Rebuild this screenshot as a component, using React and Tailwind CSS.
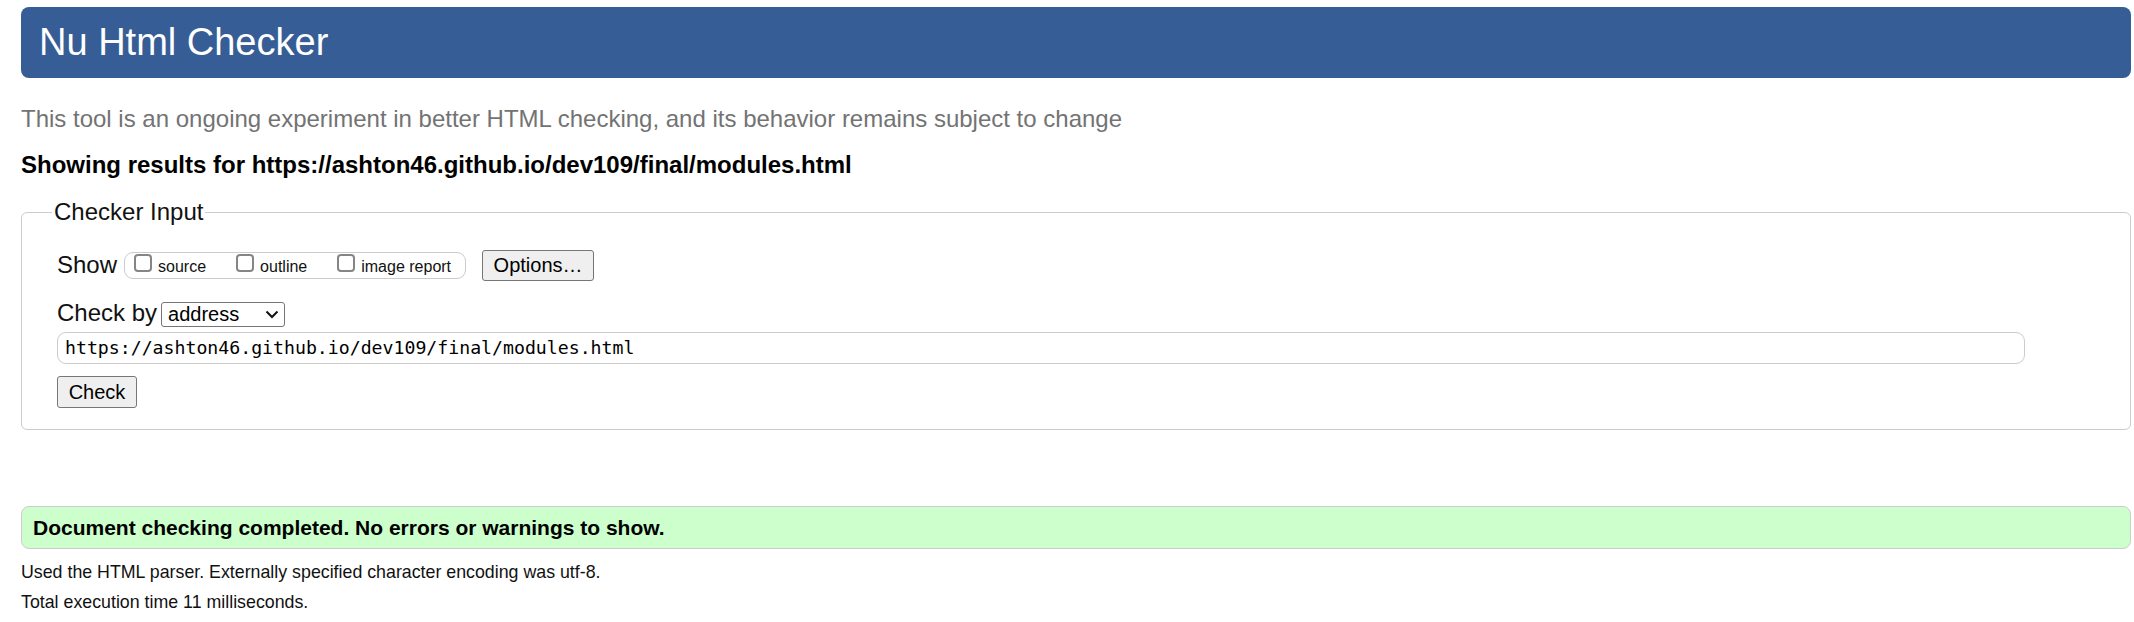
import React from 'react'

const Box = ({ label }) => (
  <label className="flex items-center">
    <span className="mb-[5px] block h-[18px] w-[18px] rounded-[4px] border-2 border-[#858585] bg-white" />
    <span className="ml-[6px] mt-[3px] text-[16px] leading-[18px]">{label}</span>
  </label>
)

export default function App() {
  return (
    <div className="min-h-screen bg-white pl-[21px] pr-[3px] text-[#111] font-['Liberation_Sans',Arial,sans-serif]">
      {/* banner */}
      <h1 className="mt-[7px] h-[71px] rounded-[8px] bg-[#365d95] pl-[18px] text-[38px] font-normal leading-[71px] text-white">
        Nu Html Checker
      </h1>

      <p className="mt-[23px] text-[24px] leading-[36px] text-[#737373]">
        This tool is an ongoing experiment in better HTML checking, and its behavior remains subject to change
      </p>
      <p className="mt-[10px] text-[24px] font-bold leading-[36px] text-black">
        Showing results for https://ashton46.github.io/dev109/final/modules.html
      </p>

      <fieldset className="mt-[16px] rounded-[6px] border border-[#cccccc] pb-[21px] pl-[35px] pr-[35px]">
        <legend className="-ml-[5px] px-[2px] text-[24px] leading-[26px]">Checker Input</legend>

        <div className="mt-[24px] flex h-[32px] items-center">
          <span className="text-[24px] leading-[32px]">Show</span>
          <div className="ml-[7px] flex h-[27px] w-[342px] items-center gap-[30px] rounded-[9px] border border-[#cccccc] px-[9px]">
            <Box label="source" />
            <Box label="outline" />
            <Box label="image report" />
          </div>
          <button className="ml-[16px] h-[31px] w-[112px] rounded-[3px] border border-[#767676] bg-[#efefef] text-center text-[20px] leading-[29px] text-black">
            Options…
          </button>
        </div>

        <div className="mt-[21px] flex h-[25px] items-center">
          <span className="h-[25px] text-[24px] leading-[22px]">Check by</span>
          <div className="ml-[4px] flex h-[25px] w-[124px] items-center justify-between rounded-[3px] border border-[#767676] bg-white pl-[6px] pr-[5px]">
            <span className="text-[20px] leading-[23px] text-black">address</span>
            <svg width="14" height="9" viewBox="0 0 14 9" fill="none">
              <path d="M1.5 1.5 L7 7 L12.5 1.5" stroke="#111" strokeWidth="2" />
            </svg>
          </div>
        </div>

        <div className="mt-[5px] flex h-[32px] w-[1968px] items-center rounded-[9px] border border-[#cccccc] pl-[7px] font-['DejaVu_Sans_Mono',monospace] text-[18.2px] text-black">
          https://ashton46.github.io/dev109/final/modules.html
        </div>

        <button className="mt-[12px] block h-[32px] w-[80px] rounded-[3px] border border-[#767676] bg-[#efefef] text-center text-[20px] leading-[30px] text-black">
          Check
        </button>
      </fieldset>

      <div className="mt-[76px] flex h-[43px] items-center rounded-[8px] border border-[#cccccc] bg-[#ccffcc] pl-[11px] text-[21px] font-bold text-black">
        Document checking completed. No errors or warnings to show.
      </div>

      <p className="mt-[8px] text-[17.8px] leading-[30px]">
        Used the HTML parser. Externally specified character encoding was utf-8.
      </p>
      <p className="text-[17.8px] leading-[30px]">Total execution time 11 milliseconds.</p>
    </div>
  )
}
